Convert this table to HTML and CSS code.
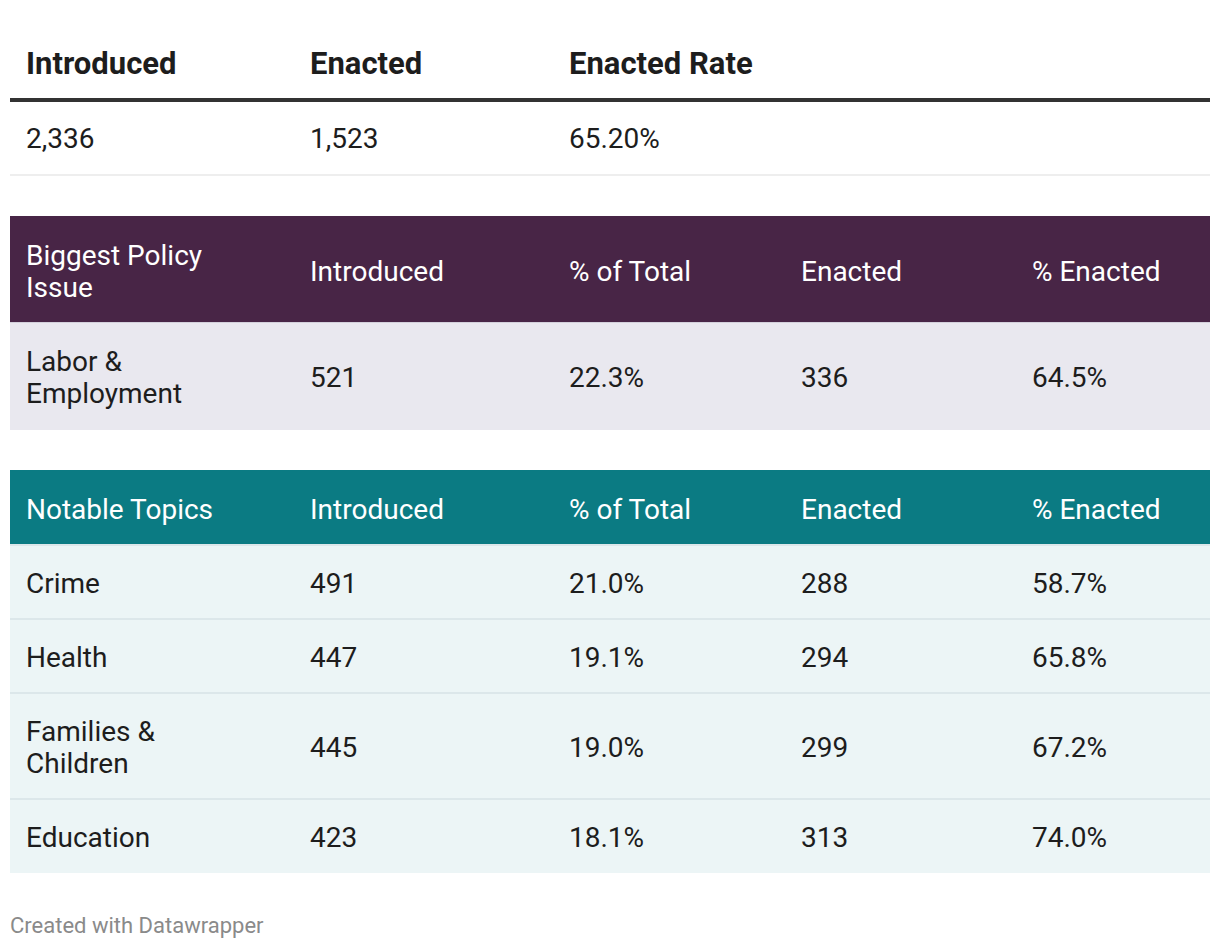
FILE: index.html
```html
<!DOCTYPE html>
<html>
<head>
<meta charset="utf-8">
<link rel="stylesheet" href="styles.css">
</head>
<body>
<div class="page">
  <table class="tbl summary">
    <colgroup><col class="c1"><col class="c2"><col></colgroup>
    <thead>
      <tr><th>Introduced</th><th>Enacted</th><th>Enacted Rate</th></tr>
    </thead>
    <tbody>
      <tr><td>2,336</td><td>1,523</td><td>65.20%</td></tr>
    </tbody>
  </table>

  <table class="tbl policy">
    <colgroup><col class="c1"><col class="c2"><col class="c3"><col class="c4"><col></colgroup>
    <thead>
      <tr><th>Biggest Policy<br>Issue</th><th>Introduced</th><th>% of Total</th><th>Enacted</th><th>% Enacted</th></tr>
    </thead>
    <tbody>
      <tr><td>Labor &amp;<br>Employment</td><td>521</td><td>22.3%</td><td>336</td><td>64.5%</td></tr>
    </tbody>
  </table>

  <table class="tbl topics">
    <colgroup><col class="c1"><col class="c2"><col class="c3"><col class="c4"><col></colgroup>
    <thead>
      <tr><th>Notable Topics</th><th>Introduced</th><th>% of Total</th><th>Enacted</th><th>% Enacted</th></tr>
    </thead>
    <tbody>
      <tr><td>Crime</td><td>491</td><td>21.0%</td><td>288</td><td>58.7%</td></tr>
      <tr><td>Health</td><td>447</td><td>19.1%</td><td>294</td><td>65.8%</td></tr>
      <tr><td>Families &amp;<br>Children</td><td>445</td><td>19.0%</td><td>299</td><td>67.2%</td></tr>
      <tr class="last"><td>Education</td><td>423</td><td>18.1%</td><td>313</td><td>74.0%</td></tr>
    </tbody>
  </table>

  <div class="footer">Created with Datawrapper</div>
</div>
</body>
</html>
```

FILE: styles.css
```css
html, body {
  margin: 0;
  padding: 0;
  background: #ffffff;
}
.page {
  padding: 26px 10px 0 10px;
  font-family: Roboto, "Liberation Sans", sans-serif;
  color: #1d1d1d;
}
.tbl {
  width: 100%;
  border-collapse: collapse;
  table-layout: fixed;
  font-size: 28px;
  line-height: 32px;
}
.tbl col.c1 { width: 284px; }
.tbl col.c2 { width: 259px; }
.tbl col.c3 { width: 232px; }
.tbl col.c4 { width: 231px; }
.tbl th, .tbl td {
  padding: 22px 16px 18px 16px;
  text-align: left;
  vertical-align: middle;
}
.tbl th { font-weight: 400; }

.summary th {
  font-weight: 700;
  font-size: 31px;
  color: #1d1d1d;
  border-bottom: 4px solid #333333;
}
.summary td {
  padding-top: 21px;
  padding-bottom: 19px;
  border-bottom: 2px solid #eeeeee;
}

.policy {
  margin-top: 40px;
}
.policy th {
  padding-top: 24px;
  padding-bottom: 18px;
  background: #482546;
  color: #ffffff;
  border-bottom: 1px solid #d3d0db;
}
.policy td {
  padding-top: 23px;
  padding-bottom: 20px;
  background: #e9e8ef;
}

.topics {
  margin-top: 40px;
}
.topics th {
  padding-top: 24px;
  padding-bottom: 18px;
  background: #0b7b83;
  color: #ffffff;
}
.topics td {
  background: #ecf5f6;
  border-top: 2px solid #dce7ea;
}
.topics tr.last td {
  padding-bottom: 19px;
}

.footer {
  margin-top: 39px;
  font-size: 22px;
  line-height: 28px;
  color: #8a8a8a;
}
```
